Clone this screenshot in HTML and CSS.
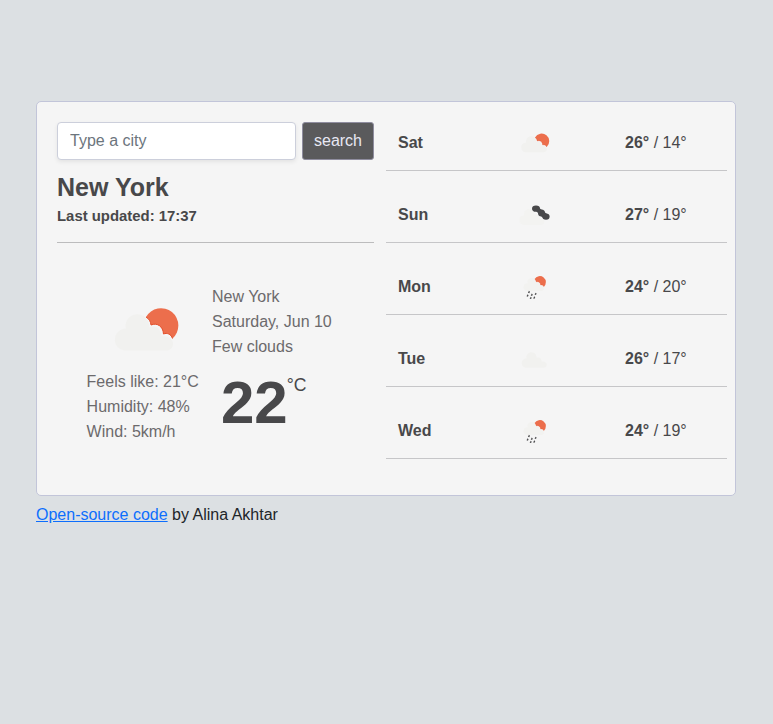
FILE: index.html
```html
<!DOCTYPE html>
<html lang="en">
<head>
<meta charset="utf-8">
<title>Weather</title>
<link rel="stylesheet" href="styles.css">
</head>
<body>
<svg class="defs" width="0" height="0" aria-hidden="true">
  <defs>
    <path id="cloud" d="M11 42.500a11 11 0 0 1-1-21.500L12.800 20.500A11.700 11.700 0 0 1 35.800 15.500L36.500 19.500C43 16.500 48 21 48.500 28.500 54 27 60 31 60 35.500 60 40 57 42.500 53 42.500z"/>
    <g id="sun">
      <path fill="#ec6e4c" d="M33 9A17.300 17.300 0 1 1 59.500 30.500C58 26 54 24.500 50.500 26 50 18 44 14.500 38 17 37.500 13 36 11 33 9z"/>
      <path fill="none" stroke="#e4502c" stroke-width="1" d="M33 9C36 11 37.500 13 38 17 44 14.500 50 18 50.500 26 54 24.500 58 26 59.500 30.500"/>
    </g>
    <g id="rain" fill="#4f4f51">
      <path d="M17 42l3 3-2 4-4-1zM36 48l3 2-2 4-4-1zM25 50l3 3-2 4-4-1zM13 52l3 3-2 4-4-1zM32 58l3 3-2 4-4-1zM22 59l3 3-2 4-4-1z"/>
    </g>
  </defs>
</svg>
<div class="page">
  <main class="card">
    <section class="current">
      <form class="search">
        <input class="search-input" type="text" placeholder="Type a city" aria-label="City">
        <button class="search-button" type="button">search</button>
      </form>
      <h1>New York</h1>
      <h2>Last updated: 17:37</h2>
      <div class="details">
        <div class="conditions">
          <svg class="icon-main" viewBox="-2 -4 70 48"><use href="#sun"/><use href="#cloud"/></svg>
          <ul>
            <li>Feels like: 21°C</li>
            <li>Humidity: 48%</li>
            <li>Wind: 5km/h</li>
          </ul>
        </div>
        <div class="summary">
          <ul>
            <li>New York</li>
            <li>Saturday, Jun 10</li>
            <li>Few clouds</li>
          </ul>
          <div class="temperature"><strong>22</strong><span>°C</span></div>
        </div>
      </div>
    </section>
    <section class="forecast">
      <div class="day">
        <b>Sat</b>
        <svg class="icon" viewBox="0 0 40 40"><g transform="translate(6.500 10.500) scale(.44)"><use href="#sun"/><use href="#cloud"/></g></svg>
        <span><b>26°</b> / 14°</span>
      </div>
      <div class="day">
        <b>Sun</b>
        <svg class="icon" viewBox="0 0 40 40"><g fill="#48484a"><ellipse cx="22" cy="13.700" rx="4" ry="3.100"/><circle cx="27.500" cy="18" r="3.500"/><ellipse cx="32" cy="21.600" rx="3.600" ry="3.200"/><path d="M20 14l4-2 9 7-3 5z"/></g><use href="#cloud" opacity=".6" transform="translate(4.500 11.500) scale(.43)"/></svg>
        <span><b>27°</b> / 19°</span>
      </div>
      <div class="day">
        <b>Mon</b>
        <svg class="icon" viewBox="0 0 40 40"><g transform="translate(9 9) scale(.35)"><use href="#sun"/><use href="#cloud" opacity=".8"/><use href="#rain"/></g></svg>
        <span><b>24°</b> / 20°</span>
      </div>
      <div class="day">
        <b>Tue</b>
        <svg class="icon" viewBox="0 0 40 40"><use href="#cloud" transform="translate(7 10.500) scale(.43)"/></svg>
        <span><b>26°</b> / 17°</span>
      </div>
      <div class="day">
        <b>Wed</b>
        <svg class="icon" viewBox="0 0 40 40"><g transform="translate(9 9) scale(.35)"><use href="#sun"/><use href="#cloud" opacity=".8"/><use href="#rain"/></g></svg>
        <span><b>24°</b> / 19°</span>
      </div>
    </section>
  </main>
  <footer><a href="#">Open-source code</a> by Alina Akhtar</footer>
</div>
</body>
</html>
```
FILE: styles.css
```css
* { box-sizing: border-box; }
body {
  margin: 0;
  background: #dce0e3;
  color: #212529;
  font: 16px/24px "Liberation Sans", Arial, sans-serif;
}
.defs { display: block; }
.page { width: 700px; margin: 0 auto 0 36px; padding-top: 101px; }
.card {
  display: grid;
  grid-template-columns: 317px 341px;
  column-gap: 12px;
  height: 395px;
  padding: 20px;
  background: #f5f5f5;
  border: 1px solid #c2c5d9;
  border-radius: 5px;
  color: #48484a;
}
.search { display: flex; gap: 6px; margin: 0; }
.search-input {
  width: 239px;
  height: 38px;
  padding: 6px 12px;
  border: 1px solid #cccfdb;
  border-radius: 4px;
  background: #fff;
  box-shadow: 0 2px 4px rgba(0, 0, 0, .075);
  font: inherit;
}
.search-input::placeholder { color: #6c757d; opacity: 1; }
.search-button {
  width: 72px;
  height: 38px;
  padding: 0;
  border: 1px solid #8f8d9f;
  border-radius: 3px;
  background: #5a5a5c;
  color: #e8e8f4;
  font: inherit;
}
h1 { margin: 12px 0 0; font-size: 25px; line-height: 30px; }
h2 {
  margin: 5px 0 0;
  padding-bottom: 17px;
  border-bottom: 1px solid #bcbcbd;
  font-size: 14.9px;
  line-height: 18px;
}
ul { margin: 0; padding: 0; list-style: none; line-height: 25px; color: #6c6a6c; }
.details { display: flex; padding: 41px 0 0 29.6px; }
.conditions { width: 125.4px; }
.icon-main { display: block; width: 70px; height: 48px; margin: 20px 0 17px 24.4px; }
.icon-main, .icon { fill: #f1f1ef; }
.temperature { display: flex; align-items: flex-start; margin: 8px 0 0 9px; }
.temperature strong { margin-right: -1px; font-size: 60px; line-height: 71px; }
.temperature span { margin-top: 8px; font-size: 17.6px; line-height: 21px; }
.day {
  display: grid;
  grid-template-columns: 116px 111px 1fr;
  align-items: center;
  height: 72px;
  padding: 32px 0 15px 12px;
  border-bottom: 1px solid #c6c6c8;
}
.day:first-child { height: 49px; padding-top: 9px; }
.icon { width: 40px; height: 40px; margin: -8px 0; }
footer { margin-top: 7px; }
footer a { color: #0d6efd; }
```
